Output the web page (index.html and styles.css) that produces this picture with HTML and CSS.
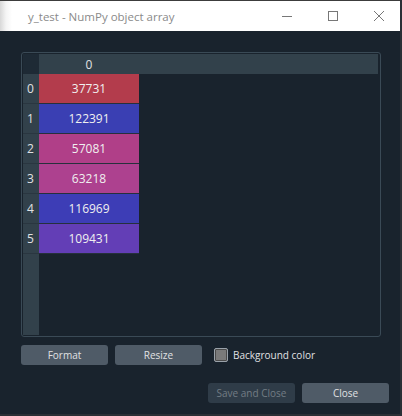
FILE: index.html
```html
<!DOCTYPE html>
<html>
<head>
<meta charset="utf-8">
<link rel="stylesheet" href="styles.css">
</head>
<body>
<div class="window">
  <div class="titlebar">
    <span class="title">y_test - NumPy object array</span>
    <div class="controls">
      <span class="ctl"><svg width="12" height="12" viewBox="0 0 12 12"><path d="M1 6.5h10" stroke="#777" stroke-width="1"/></svg></span>
      <span class="ctl"><svg width="12" height="12" viewBox="0 0 12 12"><rect x="1.5" y="1.5" width="9" height="9" fill="none" stroke="#777" stroke-width="1"/></svg></span>
      <span class="ctl"><svg width="12" height="12" viewBox="0 0 12 12"><path d="M1 1L11 11M11 1L1 11" stroke="#777" stroke-width="1"/></svg></span>
    </div>
  </div>
  <div class="content">
    <div class="frame">
      <div class="grid">
        <div class="corner"></div>
        <div class="colhead">0</div>
        <div class="colhead rest"></div>
        <div class="rowhead">0</div><div class="cell" style="background:#b33c4c">37731</div><div class="empty"></div>
        <div class="rowhead">1</div><div class="cell" style="background:#3a3fb3">122391</div><div class="empty"></div>
        <div class="rowhead">2</div><div class="cell" style="background:#b03f88">57081</div><div class="empty"></div>
        <div class="rowhead">3</div><div class="cell" style="background:#ad418f">63218</div><div class="empty"></div>
        <div class="rowhead">4</div><div class="cell" style="background:#3d3db6">116969</div><div class="empty"></div>
        <div class="rowhead">5</div><div class="cell" style="background:#633eb6">109431</div><div class="empty"></div>
        <div class="rowhead filler"></div><div class="empty wide"></div>
      </div>
    </div>
    <div class="toolbar">
      <button class="btn">Format</button>
      <button class="btn">Resize</button>
      <label class="check"><span class="box"></span>Background color</label>
    </div>
    <div class="actions">
      <button class="btn disabled">Save and Close</button>
      <button class="btn">Close</button>
    </div>
  </div>
</div>
</body>
</html>
```
FILE: styles.css
```css
html, body {
  margin: 0;
  padding: 0;
  background: #19232d;
}
.window {
  width: 402px;
  height: 416px;
  display: flex;
  flex-direction: column;
  font-family: "Open Sans", "Noto Sans", sans-serif;
  font-size: 12px;
  box-sizing: border-box;
  border-right: 2px solid #2a2f35;
  border-bottom: 2px solid #2a2f35;
}
.titlebar {
  height: 31px;
  flex: none;
  background: linear-gradient(to right, #d8d8d8 0px, #f4f4f4 6px, #ffffff 12px);
  border-top: 1px solid #3c3c3c;
  box-sizing: border-box;
  display: flex;
  align-items: center;
}
.title {
  margin-left: 28px;
  color: #8a8a8a;
  font-size: 11.5px;
  flex: 1;
}
.controls {
  display: flex;
  margin-right: -2px;
}
.ctl {
  width: 46px;
  display: flex;
  justify-content: center;
  align-items: center;
}
.content {
  flex: 1;
  padding: 21px 11px 0 21px;
  display: flex;
  flex-direction: column;
}
.frame {
  width: 360px;
  height: 285px;
  box-sizing: border-box;
  border: 1px solid #3a4a56;
  border-radius: 3px;
  padding: 1px 2px 1px 1px;
  display: flex;
}
.grid {
  flex: 1;
  display: grid;
  grid-template-columns: 16px 100px 1fr;
  grid-template-rows: 20px repeat(6, 30px) 1fr;
}
.corner {
  background: #1e2a35;
}
.colhead {
  background: #32414b;
  color: #e0e1e3;
  display: flex;
  align-items: center;
  justify-content: center;
}
.rowhead {
  background: #32414b;
  color: #e0e1e3;
  display: flex;
  align-items: center;
  padding-left: 4px;
  border-bottom: 1px solid #2a3640;
}
.rowhead.filler {
  border-bottom: none;
}
.cell {
  color: #f0f0f0;
  display: flex;
  align-items: center;
  justify-content: center;
  border-bottom: 1px solid #26303c;
}
.empty {
  background: #19232d;
}
.empty.wide {
  grid-column: span 2;
}
.toolbar {
  margin-top: 8px;
  display: flex;
  align-items: center;
  height: 20px;
}
.btn {
  font-family: "Open Sans", "Noto Sans", sans-serif;
  font-size: 10px;
  width: 87px;
  height: 20px;
  padding: 0;
  border: none;
  border-radius: 3px;
  background: #4f5b67;
  color: #e0e1e3;
  margin-right: 7px;
}
.btn.disabled {
  background: #2f3c48;
  color: #737c85;
}
.check {
  display: flex;
  align-items: center;
  color: #e0e1e3;
  font-size: 10px;
  margin-left: 5px;
}
.box {
  width: 12px;
  height: 12px;
  border: 1px solid #9aa2aa;
  border-radius: 2px;
  background: #7a7a7a;
  margin-right: 5px;
  box-shadow: inset 0 0 0 1px #4a4a4a;
}
.actions {
  margin-top: 18px;
  display: flex;
  justify-content: flex-end;
}
.actions .btn:last-child {
  margin-right: 0;
}
```
